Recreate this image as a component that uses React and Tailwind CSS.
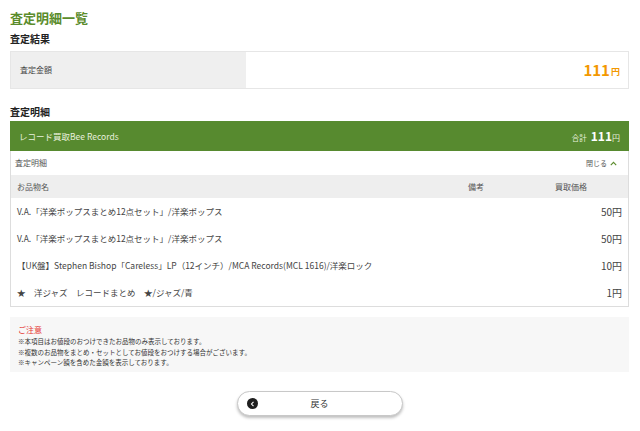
import React from 'react';

const items = [
  { name: 'V.A.「洋楽ポップスまとめ12点セット」/洋楽ポップス', note: '', price: '50' },
  { name: 'V.A.「洋楽ポップスまとめ12点セット」/洋楽ポップス', note: '', price: '50' },
  { name: '【UK盤】Stephen Bishop「Careless」LP（12インチ）/MCA Records(MCL 1616)/洋楽ロック', note: '', price: '10' },
  { name: '★　洋ジャズ　レコードまとめ　★/ジャズ/青', note: '', price: '1' },
];

export default function App() {
  return (
    <div
      className="w-[640px] h-[431px] bg-white text-[#333] overflow-hidden pl-[10px] pr-[11px]"
      style={{ fontFamily: '"Noto Sans CJK JP", "Noto Sans", sans-serif' }}
    >
      {/* Page title */}
      <h1 className="pt-[8px] text-[13px] leading-[20px] font-bold text-[#5b8c2c]">査定明細一覧</h1>

      <h2 className="mt-[4px] text-[10px] leading-[14px] font-bold text-[#222]">査定結果</h2>
      <div className="mt-[5px] flex h-[38px] border border-[#e6e6e6]">
        <div className="w-[235px] bg-[#efefef] flex items-center pl-[9px] text-[8px] text-[#444]">査定金額</div>
        <div className="flex-1 flex items-center justify-end pr-[8px] text-[#f39800] font-bold">
          <span className="text-[15px]">111</span>
          <span className="text-[9px] ml-[1px] mt-[3px]">円</span>
        </div>
      </div>

      <h2 className="mt-[16px] text-[10px] leading-[14px] font-bold text-[#222]">査定明細</h2>
      <div className="mt-[2px] border-x border-b border-[#dddddd]">
        <div className="h-[30px] -mx-px bg-[#578a2f] flex items-center justify-between pl-[9px] pr-[9px] text-white">
          <span className="text-[8.5px] text-[#e8f0de]">レコード買取Bee Records</span>
          <span className="flex items-baseline">
            <span className="text-[7.5px] text-[#e8f0de] mr-[4px]">合計</span>
            <span className="text-[12px] font-bold">111</span>
            <span className="text-[8px] text-[#e8f0de]">円</span>
          </span>
        </div>
        <div className="h-[24px] flex items-center justify-between pl-[4px] pr-[11px] text-[8px] text-[#555]">
          <span>査定明細</span>
          <span className="flex items-center gap-[3px] text-[7px]">
            閉じる
            <svg width="7" height="5" viewBox="0 0 7 5"><path d="M0.8 4.2 L3.5 1.3 L6.2 4.2" fill="none" stroke="#5b8c2c" strokeWidth="1.1" /></svg>
          </span>
        </div>
        <div className="h-[23px] bg-[#eeeeee] flex items-center text-[8px] text-[#555]">
          <span className="flex-1 pl-[6px]">お品物名</span>
          <span className="w-[96px] text-center">備考</span>
          <span className="w-[104px] text-center pr-[10px]">買取価格</span>
        </div>
        {items.map((it, i) => (
          <div key={i} className="h-[27px] flex items-center text-[8.5px] text-[#444]">
            <span className="flex-1 pl-[6px] whitespace-nowrap">{it.name}</span>
            <span className="w-[96px] text-center">{it.note}</span>
            <span className="w-[104px] text-right pr-[6px] text-[10px]">{it.price}円</span>
          </div>
        ))}
      </div>

      {/* Notice */}
      <div className="mt-[10px] h-[55px] bg-[#f7f7f7] pl-[8px] pt-[6px]">
        <p className="text-[8px] leading-[13px] text-[#e53935]">ご注意</p>
        <p className="text-[6.5px] leading-[10.5px] text-[#333]">※本項目はお値段のおつけできたお品物のみ表示しております。</p>
        <p className="text-[6.5px] leading-[10.5px] text-[#333]">※複数のお品物をまとめ・セットとしてお値段をおつけする場合がございます。</p>
        <p className="text-[6.5px] leading-[10.5px] text-[#333]">※キャンペーン額を含めた金額を表示しております。</p>
      </div>

      {/* Back button */}
      <div className="mt-[19px] flex justify-center">
        <button className="w-[166px] h-[25px] rounded-full bg-white border border-[#c8c8c8] shadow-[0_2px_3px_rgba(0,0,0,0.25)] flex items-center pl-[9px]">
          <span className="w-[11px] h-[11px] rounded-full bg-[#1e1e1e] flex items-center justify-center">
            <svg width="5" height="6" viewBox="0 0 5 6"><path d="M3.5 0.8 L1.5 3 L3.5 5.2" fill="none" stroke="#fff" strokeWidth="1.1" /></svg>
          </span>
          <span className="flex-1 text-center text-[9px] text-[#333] pr-[20px]">戻る</span>
        </button>
      </div>
    </div>
  );
}
